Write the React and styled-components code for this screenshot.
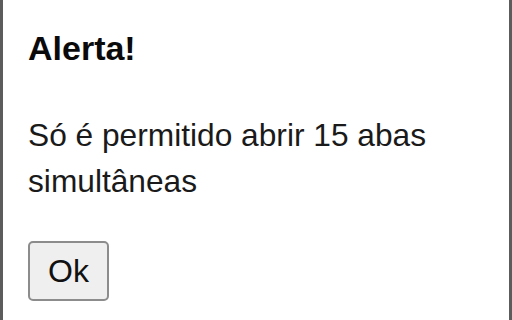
import React from 'react';
import styled, { createGlobalStyle } from 'styled-components';

const GlobalStyle = createGlobalStyle`
  html, body {
    margin: 0;
    padding: 0;
    background: #ffffff;
  }
  body {
    font-family: "Liberation Sans", Arial, sans-serif;
  }
`;

const Dialog = styled.div`
  box-sizing: border-box;
  width: 512px;
  height: 320px;
  border-left: 3px solid #5c5c5c;
  border-right: 3px solid #5c5c5c;
  padding: 29px 25px 0;
  background: #ffffff;
  color: #111111;
  overflow: hidden;
`;

const Title = styled.h1`
  margin: 0 0 44px;
  font-size: 34px;
  font-weight: 700;
  line-height: 39px;
  color: #0a0a0a;
`;

const Message = styled.p`
  margin: 0 0 37px;
  font-size: 31.7px;
  line-height: 46px;
  color: #1a1a1a;
`;

const OkButton = styled.button`
  box-sizing: border-box;
  height: 60px;
  padding: 0 18px;
  font-family: "Liberation Sans", Arial, sans-serif;
  font-size: 32px;
  line-height: 37px;
  color: #111111;
  background: #efefef;
  border: 2px solid #8c8c8c;
  border-radius: 5px;
  cursor: pointer;

  &:hover {
    background: #e5e5e5;
  }
`;

const App = () => {
  return (
    <>
      <GlobalStyle />
      <Dialog role="alertdialog">
        <Title>Alerta!</Title>
        <Message>Só é permitido abrir 15 abas simultâneas</Message>
        <OkButton type="button">Ok</OkButton>
      </Dialog>
    </>
  );
};

export default App;
